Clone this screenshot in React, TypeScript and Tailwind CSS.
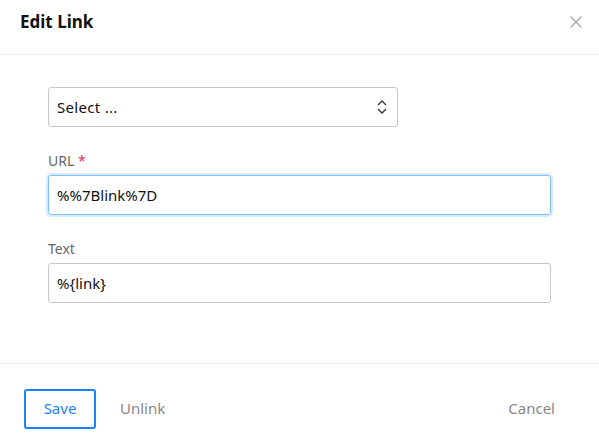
import React from "react";

export default function App() {
  return (
    <div className="w-[599px] h-[444px] bg-white flex flex-col text-[#212529]" style={{ fontFamily: '"Noto Sans", "Open Sans", sans-serif' }}>
      <div className="h-[55px] border-b border-[#ececec] flex items-center justify-between pl-5 pr-4 shrink-0">
        <div className="text-[17px] font-bold text-[#111] -mt-[11px]">Edit Link</div>
        <svg width="12" height="12" viewBox="0 0 12 12" className="-mt-[10px] mr-[1px]">
          <path d="M0.5 0.5L11.5 11.5M11.5 0.5L0.5 11.5" stroke="#a8a8a8" strokeWidth="1.4" />
        </svg>
      </div>
      <div className="flex-1 px-12 pt-8 flex flex-col">
        <div className="w-[350px] h-[40px] border border-[#c8c8c8] rounded-[3px] flex items-center justify-between pl-2 pr-[10px]">
          <span className="text-[15px] text-[#111] tracking-[0.3px]">Select ...</span>
          <svg width="10" height="14" viewBox="0 0 10 14">
            <path d="M1 5L5 1L9 5M1 9L5 13L9 9" fill="none" stroke="#333" strokeWidth="1.3" />
          </svg>
        </div>
        <div className="mt-[24px] text-[14px] text-[#666] leading-[20px]">
          URL <span className="text-[#e8336b]">*</span>
        </div>
        <div className="mt-[4px] h-[40px] border border-[#80bdff] rounded-[3px] shadow-[0_0_0_2px_rgba(0,123,255,0.15)] flex items-center pl-2">
          <span className="text-[15px] text-[#111]">%%7Blink%7D</span>
        </div>
        <div className="mt-[24px] text-[14px] text-[#666] leading-[20px]">Text</div>
        <div className="mt-[4px] h-[40px] border border-[#c8c8c8] rounded-[3px] flex items-center pl-2">
          <span className="text-[15px] text-[#111]">%&#123;link&#125;</span>
        </div>
      </div>
      <div className="h-[81px] border-t border-[#ececec] flex items-center pt-[9px] px-6 shrink-0">
        <button className="w-[72px] h-[40px] border-2 border-[#1a82ff] rounded-[3px] text-[15px] text-[#1a82ff]">Save</button>
        <button className="ml-[24px] text-[15px] text-[#888]">Unlink</button>
        <div className="flex-1" />
        <button className="mr-[20px] text-[15px] text-[#888]">Cancel</button>
      </div>
    </div>
  );
}
